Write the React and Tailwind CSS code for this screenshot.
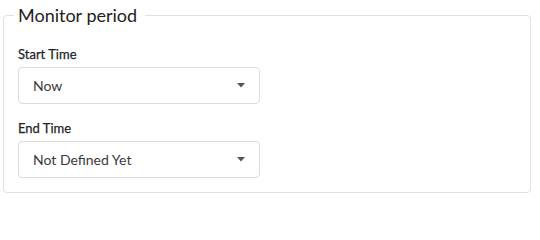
const fields = [
  { label: "Start Time", value: "Now" },
  { label: "End Time", value: "Not Defined Yet" },
];

function SelectBox({ value }) {
  return (
    <div className="flex h-[37px] w-[242px] items-center justify-between rounded-[4px] border border-[#dcdcdc] bg-white pl-[14px] pr-[14px]">
      <span className="text-[14px] leading-none text-[#3a3a3a]">{value}</span>
      <svg width="8" height="5" viewBox="0 0 8 5" className="text-[#555]">
        <path d="M0 0h8L4 4.5z" fill="currentColor" />
      </svg>
    </div>
  );
}

export default function App() {
  return (
    <div className="h-[201px] overflow-hidden bg-white pl-[3px] pr-[9px] pt-[3px] font-['Lato','Liberation_Sans',sans-serif] text-[#333]">
      <fieldset className="rounded-[4px] border border-[#e0e0e0] pb-[14px] pl-[14px] pr-[14px]">
        <legend className="-ml-1 pl-1 pr-2 text-[18px] leading-[24px] text-[#222]">Monitor period</legend>
        <div className="flex flex-col gap-[16px] pt-[19px]">
          {fields.map((field) => (
            <div key={field.label} className="flex flex-col gap-[5px]">
              <label className="text-[13px] font-normal leading-[16px] text-[#1f1f1f] [-webkit-text-stroke:0.25px_#1f1f1f]">
                {field.label}
              </label>
              <SelectBox value={field.value} />
            </div>
          ))}
        </div>
      </fieldset>
    </div>
  );
}
